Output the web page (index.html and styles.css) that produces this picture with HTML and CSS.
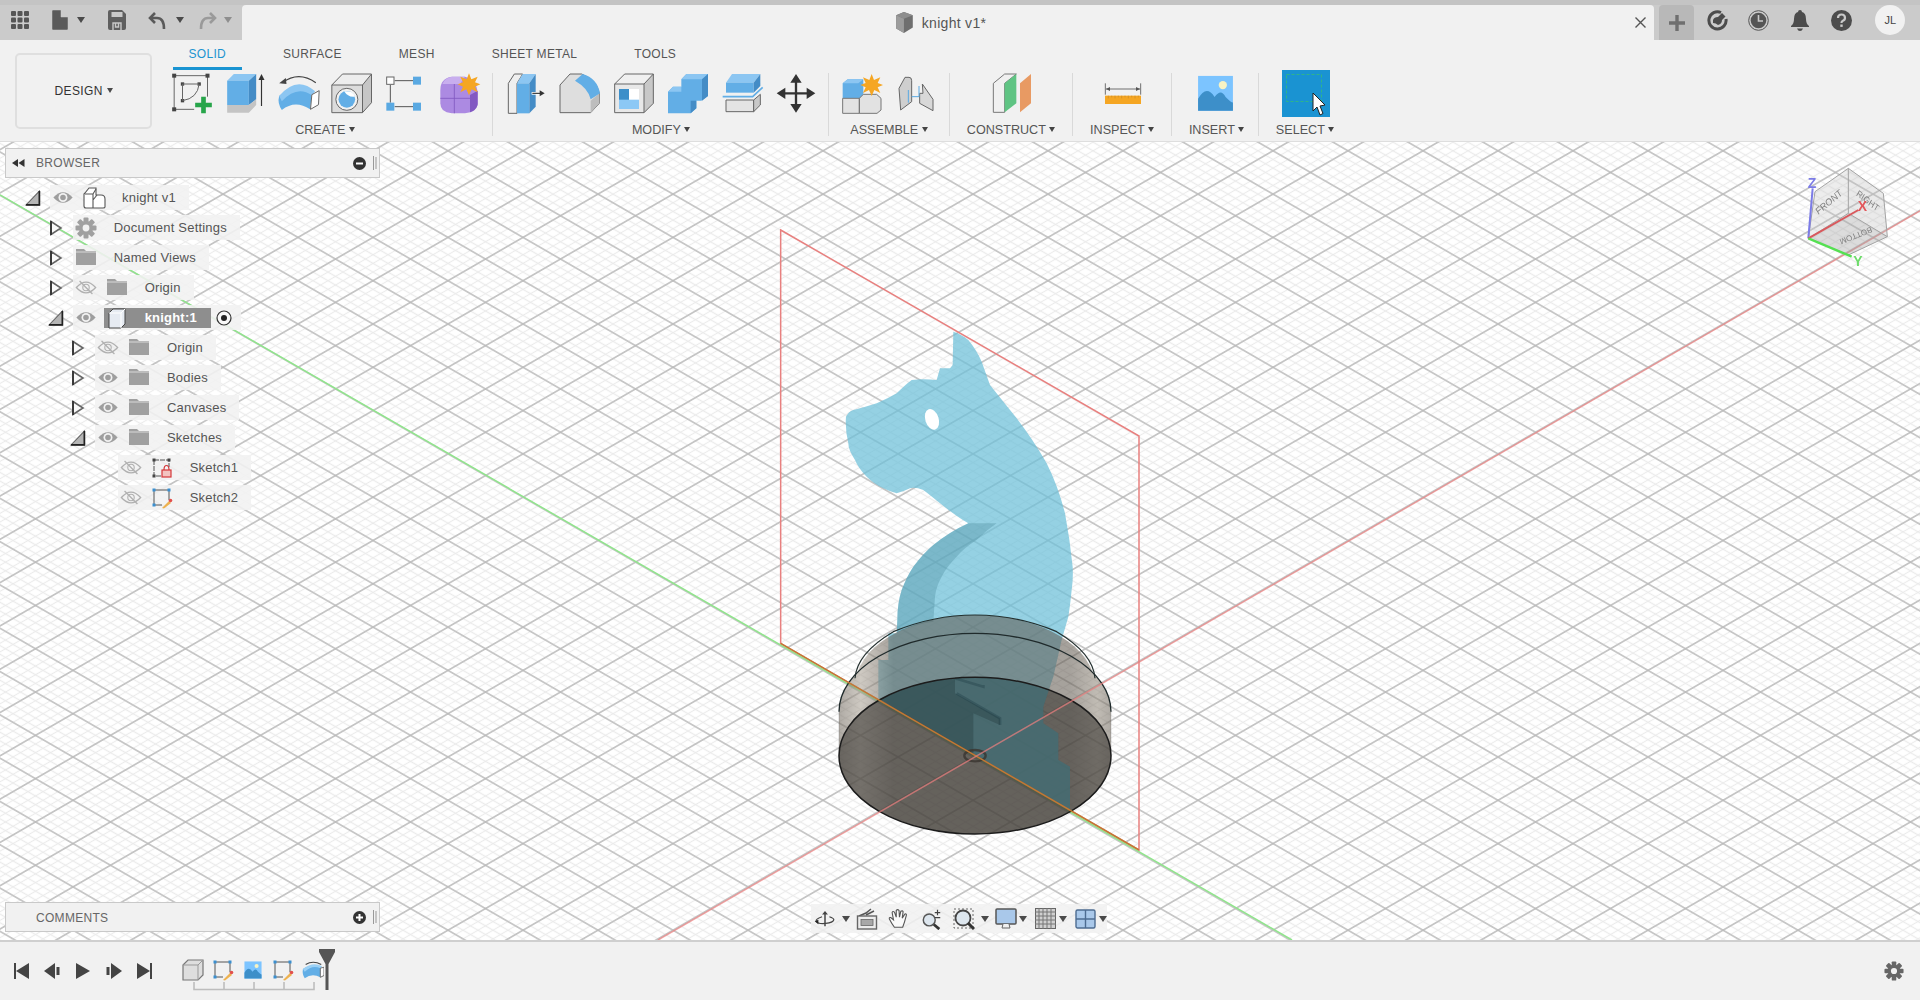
FILE: index.html
```html
<!DOCTYPE html>
<html lang="en">
<head>
    <meta charset="UTF-8">
    <title>knight v1</title>
    <link rel="stylesheet" href="styles.css">
</head>
<body>

<svg class="defs" width="0" height="0">
    <defs>
        <symbol id="eye" viewBox="0 0 20 14">
            <path d="M1 7 Q10 -3 19 7 Q10 17 1 7Z" fill="#9e9e9e"/>
            <circle cx="10" cy="7" r="4.2" fill="#f1f1f1"/>
            <circle cx="10" cy="7" r="2.6" fill="#9e9e9e"/>
        </symbol>
        <symbol id="eye-off" viewBox="0 0 20 14">
            <path d="M1 7 Q10 -3 19 7 Q10 17 1 7Z" fill="none" stroke="#b0b0b0" stroke-width="1.2"/>
            <circle cx="10" cy="7" r="3" fill="none" stroke="#b0b0b0"/>
            <path d="M4 1 L16 13" stroke="#b0b0b0" stroke-width="1.2"/>
        </symbol>
        <symbol id="folder" viewBox="0 0 20 16">
            <path d="M0 0 H8 L10 2 H20 V16 H0Z" fill="#a0a0a0"/>
            <path d="M0 3 H20" stroke="#f1f1f1" stroke-width=".7"/>
        </symbol>
        <symbol id="tri-closed" viewBox="0 0 13 16">
            <path d="M1.5 1.5 L11.5 8 L1.5 14.5Z" fill="#fafafa" stroke="#666" stroke-width="1.6"/>
            <path d="M1.5 1 V15" stroke="#333" stroke-width="1.8"/>
        </symbol>
        <symbol id="tri-open" viewBox="0 0 15 15">
            <path d="M13.5 1 V14 H1Z" fill="#b5b5b5" stroke="#666"/>
            <path d="M13.5 1 V14 H1" fill="none" stroke="#222" stroke-width="1.6"/>
        </symbol>
        <symbol id="sketch-pen" viewBox="0 0 22 22">
            <path d="M3 3 H18 V13 M3 3 V18 H11" fill="none" stroke="#555" stroke-width="1"/>
            <rect x="1.5" y="1.5" width="3" height="3" fill="#3b8fd0"/>
            <rect x="16.5" y="1.5" width="3" height="3" fill="#3b8fd0"/>
            <rect x="1.5" y="16.5" width="3" height="3" fill="#3b8fd0"/>
            <path d="M11 21 L18 14 L20 16 L13 21.5Z" fill="#edb14e"/>
            <circle cx="19.5" cy="13.5" r="1.8" fill="#e2504c"/>
        </symbol>
        <symbol id="picture" viewBox="0 0 40 40">
            <rect x="1" y="1" width="38" height="38" fill="#7cc4ff"/>
            <path d="M1 39 V26 Q10 10 19 24 Q26 14 31 24 Q37 30 39 30 V39Z" fill="#3d8fc9"/>
            <circle cx="28" cy="11" r="4.5" fill="#f7f3c4"/>
        </symbol>
    </defs>
</svg>

<header class="titlebar">
    <div class="bar-left">
        <span class="bar-ico cell-grid">
            <svg width="18" height="18" viewBox="0 0 18 18"><g fill="#555"><rect width="5" height="5" rx="1"/><rect x="6.5" width="5" height="5" rx="1"/><rect x="13" width="5" height="5" rx="1"/><rect y="6.5" width="5" height="5" rx="1"/><rect x="6.5" y="6.5" width="5" height="5" rx="1"/><rect x="13" y="6.5" width="5" height="5" rx="1"/><rect y="13" width="5" height="5" rx="1"/><rect x="6.5" y="13" width="5" height="5" rx="1"/><rect x="13" y="13" width="5" height="5" rx="1"/></g></svg>
        </span>
        <span class="bar-ico cell-doc">
            <svg width="16" height="20" viewBox="0 0 16 20"><path d="M0 1 Q0 0 1 0 H9 L16 7 V19 Q16 20 15 20 H1 Q0 20 0 19Z M9 0 V7 H16" fill="#5a5a5a" stroke="#c9c9c9" stroke-width=".5"/></svg>
        </span>
        <span class="bar-caret cell-c1"><i class="caret big dark"></i></span>
        <span class="bar-ico cell-save">
            <svg width="18" height="20" viewBox="0 0 18 20"><path d="M2 0 H14 L18 4 V18 Q18 20 16 20 H2 Q0 20 0 18 V2 Q0 0 2 0Z" fill="#5f5f5f"/><rect x="3.5" y="2" width="11" height="5" fill="#c9c9c9"/><path d="M5 20 V13 H13 V20 M7.5 13 V17 H10.5 V13" fill="none" stroke="#c9c9c9" stroke-width="1.4"/></svg>
        </span>
        <span class="bar-ico cell-undo">
            <svg width="20" height="20" viewBox="0 0 20 20"><path d="M7 3 L2 8 L7 13" fill="none" stroke="#5a5a5a" stroke-width="2.6"/><path d="M3 8 H9 Q16 8 16 19" fill="none" stroke="#5a5a5a" stroke-width="2.6"/></svg>
        </span>
        <span class="bar-caret cell-c2"><i class="caret big dark"></i></span>
        <span class="bar-ico cell-redo">
            <svg width="20" height="20" viewBox="0 0 20 20"><path d="M13 3 L18 8 L13 13" fill="none" stroke="#9a9a9a" stroke-width="2.6"/><path d="M17 8 H11 Q4 8 4 19" fill="none" stroke="#9a9a9a" stroke-width="2.6"/></svg>
        </span>
        <span class="bar-caret cell-c3"><i class="caret big muted"></i></span>
    </div>

    <div class="doc-tab">
        <div class="doc-title">
            <svg width="19" height="21" viewBox="0 0 17 19"><path d="M1 3 L8 0 L16 3 V14 L8 19 L1 15Z" fill="#6f6f6f"/><path d="M1 3 L8 6 L16 3 L8 0Z" fill="#8e8e8e"/><path d="M8 6 V19 L1 15 V3Z" fill="#9c9c9c"/></svg>
            <span>knight v1*</span>
        </div>
        <svg class="doc-close" width="11" height="11" viewBox="0 0 11 11"><path d="M0.5 0.5 L10.5 10.5 M10.5 0.5 L0.5 10.5" stroke="#555" stroke-width="1.4"/></svg>
    </div>

    <div class="new-tab">
        <svg width="18" height="18" viewBox="0 0 18 18"><path d="M9 1 V17 M1 9 H17" stroke="#6f6f6f" stroke-width="3.4"/></svg>
    </div>

    <div class="bar-right">
        <span class="bar-cell">
            <svg width="21" height="21" viewBox="0 0 21 21"><path d="M14 2.500 A8.600 8.600 0 1 0 19 9" fill="none" stroke="#4c4c4c" stroke-width="3"/><path d="M6 10 Q7 7 11 7 L15 3 L18.500 6.500 L15 10 Q15 14 11 15 Q9 13 6 13Z" fill="#4c4c4c"/></svg>
        </span>
        <span class="bar-cell">
            <svg width="21" height="21" viewBox="0 0 21 21"><circle cx="10.5" cy="10.5" r="9.8" fill="none" stroke="#555" stroke-width="1"/><circle cx="10.5" cy="10.5" r="7.8" fill="#555"/><path d="M10.5 5 V11 H15" fill="none" stroke="#c9c9c9" stroke-width="1.6"/></svg>
        </span>
        <span class="bar-cell">
            <svg width="18" height="21" viewBox="0 0 18 21"><path d="M9 0 Q11 0 11 2 Q15 3 15 9 Q15 14 18 16 V17 H0 V16 Q3 14 3 9 Q3 3 7 2 Q7 0 9 0Z M6 18.500 H12 Q11 21 9 21 Q7 21 6 18.500Z" fill="#4c4c4c"/></svg>
        </span>
        <span class="bar-cell">
            <svg width="21" height="21" viewBox="0 0 21 21"><circle cx="10.5" cy="10.500" r="10.500" fill="#4c4c4c"/><path d="M7 8 Q7 4.500 10.500 4.500 Q14 4.500 14 8 Q14 10 11.500 11 Q10.500 11.500 10.500 13" fill="none" stroke="#c9c9c9" stroke-width="2.200"/><rect x="9.300" y="14.500" width="2.400" height="2.400" fill="#c9c9c9"/></svg>
        </span>
        <span class="avatar">JL</span>
    </div>
</header>

<section class="toolbar">
    <button class="design-btn">DESIGN <i class="caret dark"></i></button>
    <div class="tools">
        <nav class="tabs">
            <span class="tab active">SOLID</span>
            <span class="tab">SURFACE</span>
            <span class="tab">MESH</span>
            <span class="tab">SHEET METAL</span>
            <span class="tab">TOOLS</span>
        </nav>
        <div class="panels">
            <div class="panel panel-create">
                <div class="panel-icons">
                    <svg class="tool" viewBox="0.5 30 159 144">
                        <path d="M25 47 H125 V110 M25 47 V148 H85" fill="none" stroke="#666" stroke-width="3"/>
                        <g fill="#444"><rect x="19" y="41" width="12" height="12"/><rect x="119" y="41" width="12" height="12"/><rect x="19" y="142" width="12" height="12"/><rect x="45" y="67" width="10" height="10"/><rect x="95" y="67" width="10" height="10"/><rect x="45" y="117" width="10" height="10"/></g>
                        <path d="M50 72 H100 M50 72 V122 M100 72 Q95 115 50 122" fill="none" stroke="#666" stroke-width="3"/>
                        <path d="M113 110 V160 M88 135 H138" stroke="#27a54a" stroke-width="14"/>
                    </svg>
                    <svg class="tool" viewBox="160.500 30 159 144">
                        <path d="M185 62 L205 42 H272 L250 62Z" fill="#8cc6f2"/>
                        <rect x="185" y="62" width="65" height="73" fill="#62aee6"/>
                        <path d="M250 62 L272 42 V118 L250 135Z" fill="#448cc6"/>
                        <path d="M185 135 H250 L272 118 V135 L250 158 H185Z" fill="#c4c4c4"/>
                        <path d="M288 138 V56" stroke="#333" stroke-width="3.500"/>
                        <path d="M279 60 L288 42 L297 60Z" fill="#333"/>
                    </svg>
                    <svg class="tool" viewBox="320.500 30 159 144">
                        <path d="M352 68 Q400 32 452 68" fill="none" stroke="#444" stroke-width="3.500"/>
                        <path d="M342 70 L362 54 L364 72Z" fill="#444"/>
                        <path d="M342 108 Q395 60 440 100 L435 148 Q390 118 350 150 Q336 130 342 108Z" fill="#62aee6"/>
                        <path d="M342 108 Q395 45 450 94 L440 106 Q395 75 350 124Z" fill="#8cc6f2"/>
                        <path d="M440 104 L462 92 L460 134 L436 148Z" fill="#fff" stroke="#666" stroke-width="3"/>
                    </svg>
                    <svg class="tool" viewBox="482.500 30 159 144">
                        <path d="M503 75 H595 V158 H503Z" fill="#dcdcdc"/>
                        <path d="M503 75 L535 42 H622 L595 75Z" fill="#ededed"/>
                        <path d="M595 75 L622 42 V128 L595 158Z" fill="#c6c6c6"/>
                        <path d="M503 158 V75 L535 42 H622 V128 L595 158Z M503 75 H595 V158 M595 75 L622 42" fill="none" stroke="#666" stroke-width="3"/>
                        <circle cx="548" cy="118" r="33" fill="#f2f2f2" stroke="#666" stroke-width="3"/>
                        <circle cx="548" cy="118" r="25" fill="#62aee6"/>
                        <path d="M540 94 Q552 113 572 110 Q568 92 540 94Z" fill="#fff"/>
                    </svg>
                    <svg class="tool" viewBox="640 30 159 144">
                        <path d="M690 62 H745 M677 75 V128 M690 140 H745" stroke="#555" stroke-width="3"/>
                        <rect x="666" y="51" width="22" height="22" fill="#fff" stroke="#666" stroke-width="3"/>
                        <rect x="745" y="50" width="24" height="24" fill="#5aa9e2"/>
                        <rect x="665" y="128" width="24" height="24" fill="#5aa9e2"/>
                        <rect x="745" y="128" width="24" height="24" fill="#5aa9e2"/>
                    </svg>
                    <svg class="tool" viewBox="798 30 159 144">
                        <path d="M826 90 Q826 55 860 50 H900 Q936 60 938 100 V130 Q936 158 900 160 H860 Q826 158 826 130Z" fill="#ac8ae2"/>
                        <path d="M832 72 Q840 52 862 50 H900 L885 72Z" fill="#c8aeee"/>
                        <path d="M915 105 L938 92 V135 Q932 152 915 157Z" fill="#8259c2"/>
                        <path d="M826 115 H915 M868 72 V160" stroke="#8259c2" stroke-width="2.500" fill="none"/>
                        <path d="M912 40 L919 58 L938 50 L930 67 L946 73 L930 80 L938 97 L920 88 L912 106 L904 88 L886 97 L894 80 L878 73 L894 67 L886 50 L905 58Z" fill="#f5a623"/>
                    </svg>
                </div>
                <div class="panel-label">CREATE <i class="caret"></i></div>
            </div>
            <span class="sep"></span>
            <div class="panel panel-modify">
                <div class="panel-icons">
                    <svg class="tool" viewBox="15.500 30 159 144">
                        <path d="M42 160 V70 L60 42 H85 L68 70 V160Z" fill="#efefef" stroke="#666" stroke-width="3"/>
                        <path d="M68 70 L85 42 H124 L105 70Z" fill="#8cc6f2"/>
                        <rect x="68" y="70" width="37" height="90" fill="#62aee6"/>
                        <path d="M105 70 L124 42 V140 L105 160Z" fill="#448cc6"/>
                        <path d="M112 100 H138" stroke="#fff" stroke-width="8"/>
                        <path d="M114 100 H138" stroke="#333" stroke-width="3.500"/>
                        <path d="M136 91 L151 100 L136 109Z" fill="#333"/>
                    </svg>
                    <svg class="tool" viewBox="180.500 30 159 144">
                        <path d="M200 158 V75 L230 42 H265 Q310 60 318 100 V130 L292 158Z" fill="#dedede" stroke="#666" stroke-width="3"/>
                        <path d="M292 122 L318 100 V130 L292 158Z" fill="#bdbdbd"/>
                        <path d="M245 62 L268 42 Q312 55 320 100 L292 118 Q285 85 245 62Z" fill="#62aee6"/>
                    </svg>
                    <svg class="tool" viewBox="340.500 30 159 144">
                        <rect x="362" y="72" width="88" height="86" fill="#e8e8e8"/>
                        <path d="M362 72 L392 42 H478 L450 72Z" fill="#f0f0f0"/>
                        <path d="M450 72 L478 42 V130 L450 158Z" fill="#c8c8c8"/>
                        <path d="M362 158 V72 L392 42 H478 V130 L450 158Z M362 72 H450 V158 M450 72 L478 42" fill="none" stroke="#666" stroke-width="3"/>
                        <rect x="375" y="87" width="60" height="60" fill="#8cc8f5"/>
                        <rect x="375" y="87" width="30" height="32" fill="#3d8fc9"/>
                        <rect x="405" y="87" width="30" height="32" fill="#fff"/>
                    </svg>
                    <svg class="tool" viewBox="500.500 30 159 144">
                        <path d="M520 160 V95 L535 80 H560 V58 L575 42 H640 V108 L620 122 H605 V145 L588 160Z" fill="#62aee6"/>
                        <path d="M520 95 L535 80 H560 V95Z M560 58 L575 42 H640 L622 58Z" fill="#8cc6f2"/>
                        <path d="M622 58 L640 42 V108 L622 122Z M588 122 H605 V145 L588 160Z" fill="#448cc6"/>
                    </svg>
                    <svg class="tool" viewBox="660.500 30 159 144">
                        <path d="M692 68 L710 42 H795 L775 68Z" fill="#8cc6f2"/>
                        <rect x="692" y="68" width="83" height="30" fill="#62aee6"/>
                        <path d="M775 68 L795 42 V78 L775 98Z" fill="#448cc6"/>
                        <path d="M682 110 H772 L802 82" fill="none" stroke="#62aee6" stroke-width="5"/>
                        <path d="M692 120 H775 V155 H692Z" fill="#e4e4e4" stroke="#666" stroke-width="3"/>
                        <path d="M775 120 L795 103 V135 L775 155Z" fill="#c8c8c8" stroke="#666" stroke-width="3"/>
                    </svg>
                    <svg class="tool" viewBox="825.500 30 159 144">
                        <path d="M905 60 V140 M865 100 H945" stroke="#333" stroke-width="7"/>
                        <path d="M905 42 L922 68 H888Z M905 158 L922 132 H888Z M847 100 L873 83 V117Z M963 100 L937 83 V117Z" fill="#333"/>
                    </svg>
                </div>
                <div class="panel-label">MODIFY <i class="caret"></i></div>
            </div>
            <span class="sep"></span>
            <div class="panel panel-assemble">
                <div class="panel-icons">
                    <svg class="tool wide" viewBox="0 30 162 144">
                        <path d="M23 115 V70 L38 58 H85 V115Z" fill="#62aee6"/>
                        <path d="M23 70 L38 58 H85 L70 70Z" fill="#8cc6f2"/>
                        <path d="M23 115 H73 V160 H23Z M73 115 L85 103 H125 L138 115 V150 L126 160 H73Z" fill="#e2e2e2" stroke="#777" stroke-width="3"/>
                        <path d="M110 42 L117 60 L136 52 L128 69 L144 75 L128 82 L136 99 L118 90 L110 108 L102 90 L84 99 L92 82 L76 75 L92 69 L84 52 L103 60Z" fill="#f5a623"/>
                    </svg>
                    <svg class="tool wide" viewBox="0 30 162 144">
                        <path d="M35 150 L30 85 L48 52 H60 Q68 52 68 62 V125 Z" fill="#cfcfcf" stroke="#666" stroke-width="3"/>
                        <path d="M92 100 H102 L100 72 L132 118 V152 L92 130Z" fill="#d8d8d8" stroke="#666" stroke-width="3"/>
                        <path d="M58 90 V128 M90 78 V110 H68" fill="none" stroke="#5aa9e2" stroke-width="3"/>
                    </svg>
                </div>
                <div class="panel-label">ASSEMBLE <i class="caret"></i></div>
            </div>
            <span class="sep"></span>
            <div class="panel panel-construct">
                <div class="panel-icons">
                    <svg class="tool" viewBox="0 30 159 144">
                        <path d="M25 157 V70 L59 42 H94 L59 70 V157Z" fill="#f0f0f0" stroke="#777" stroke-width="3"/>
                        <path d="M59 157 L94 130 V42 L59 70Z" fill="#5fc483"/>
                        <path d="M105 157 L138 130 V42 L105 70Z" fill="#e89a63"/>
                    </svg>
                </div>
                <div class="panel-label">CONSTRUCT <i class="caret"></i></div>
            </div>
            <span class="sep"></span>
            <div class="panel panel-inspect">
                <div class="panel-icons">
                    <svg class="tool" viewBox="0 30 159 144">
                        <path d="M28 70 V104 M134 70 V104 M30 87 H132" stroke="#555" stroke-width="2.500"/>
                        <path d="M30 87 L42 81 V93Z M132 87 L120 81 V93Z" fill="#555"/>
                        <rect x="27" y="107" width="108" height="25" fill="#f5a623"/>
                        <path d="M37 107 v8 M47 107 v5 M57 107 v8 M67 107 v5 M77 107 v8 M87 107 v5 M97 107 v8 M107 107 v5 M117 107 v8 M127 107 v5" stroke="#c48a2a" stroke-width="2"/>
                    </svg>
                </div>
                <div class="panel-label">INSPECT <i class="caret"></i></div>
            </div>
            <span class="sep"></span>
            <div class="panel panel-insert">
                <div class="panel-icons">
                    <svg class="tool" viewBox="0 30 159 144"><use href="#picture" x="22" y="45" width="115" height="110"/></svg>
                </div>
                <div class="panel-label">INSERT <i class="caret"></i></div>
            </div>
            <span class="sep"></span>
            <div class="panel panel-select">
                <div class="panel-icons">
                    <svg class="select-btn" width="48" height="47" viewBox="0 0 48 47">
                        <rect width="48" height="47" fill="#1a93d2"/>
                        <rect x="4.500" y="4.500" width="35" height="27" fill="none" stroke="#2fb48a" stroke-width="1" stroke-dasharray="3 2"/>
                        <path d="M31 23 V41 L35 37 L38 45 L41 43.500 L38 36 L43 35Z" fill="#fff" stroke="#222" stroke-width="1"/>
                    </svg>
                </div>
                <div class="panel-label">SELECT <i class="caret"></i></div>
            </div>
        </div>
    </div>
</section>

<main class="viewport">
    <!-- model space: grid, axes, plane and the knight sit on one canvas -->
    <svg class="canvas" viewBox="0 142 1920 798" width="1920" height="798">
        <defs>
            <pattern id="grid-minor" patternUnits="userSpaceOnUse" width="1" height="1" patternTransform="matrix(7.5 4.33 7.5 -4.33 965.500 757)">
                <path d="M0 .5 H1 M.5 0 V1" stroke="#ebebeb" stroke-width=".15" fill="none"/>
            </pattern>
            <pattern id="grid-major" patternUnits="userSpaceOnUse" width="1" height="1" patternTransform="matrix(37.5 21.65 37.5 -21.65 935.500 757)">
                <path d="M0 .5 H1 M.5 0 V1" stroke="#bababa" stroke-width=".036" fill="none"/>
            </pattern>
            <clipPath id="base-clip"><ellipse cx="645" cy="1607" rx="408" ry="235"/></clipPath>
            <linearGradient id="base-side" gradientUnits="userSpaceOnUse" x1="237" y1="0" x2="1053" y2="0">
                <stop offset="0" stop-color="#6f675c"/>
                <stop offset=".08" stop-color="#a89f92"/>
                <stop offset=".2" stop-color="#5f574d"/>
                <stop offset=".85" stop-color="#5f574d"/>
                <stop offset=".95" stop-color="#8f8678"/>
                <stop offset="1" stop-color="#6f675c"/>
            </linearGradient>
            <path id="knight-body" d="M580 335 Q600 340 625 360 Q650 390 665 425 L690 495 Q730 545 770 595 Q820 660 860 730 Q895 800 915 880 Q930 960 938 1040 Q940 1080 935 1110 Q930 1160 925 1190 L905 1260 L880 1370 L850 1460 V1510 L895 1540 V1620 L930 1640 V1770 L355 1435 V1320 H385 V1240 H410 L412 1200 Q412 1150 425 1110 Q440 1070 460 1040 Q490 1000 520 975 Q570 935 625 910 Q590 890 540 850 Q510 825 490 810 Q465 800 450 805 Q430 815 410 820 Q390 815 370 805 Q340 790 320 770 Q295 745 285 720 Q265 690 265 670 Q255 630 258 590 Q265 575 280 570 Q320 560 350 550 Q385 535 410 520 Q435 495 455 480 Q490 475 530 480 L540 445 L570 445 L578 435Z"/>
        </defs>
        <rect x="0" y="142" width="1920" height="798" fill="#fff"/>
        <rect x="0" y="142" width="1920" height="798" fill="url(#grid-minor)"/>
        <rect x="0" y="142" width="1920" height="798" fill="url(#grid-major)"/>
        <path d="M0 195 L1292 940" stroke="#90e58c" stroke-width="1.500"/>

        <g transform="translate(760 220) scale(.33333)">
            <use href="#knight-body" fill="#6cbfd8" fill-opacity=".72"/>
            <path d="M625 910 H710 Q680 930 650 960 Q610 985 590 1010 Q560 1040 545 1070 Q528 1100 525 1130 L520 1205 Q465 1212 410 1238 L412 1200 Q412 1150 425 1110 Q440 1070 460 1040 Q490 1000 520 975 Q570 935 625 910Z" fill="#4a8a9c" fill-opacity=".35"/>
            <path d="M62 30 L1137 648 V1890 L62 1270Z" fill="none" stroke="#e8807f" stroke-width="4.500"/>

            <g opacity=".55">
                <ellipse cx="645" cy="1400" rx="360" ry="215" fill="url(#base-side)"/>
                <ellipse cx="645" cy="1475" rx="408" ry="235" fill="url(#base-side)"/>
                <rect x="237" y="1475" width="816" height="132" fill="url(#base-side)"/>
                <ellipse cx="645" cy="1607" rx="408" ry="235" fill="url(#base-side)"/>
            </g>
            <ellipse cx="645" cy="1607" rx="408" ry="235" fill="#3e3a36" fill-opacity=".62"/>
            <g clip-path="url(#base-clip)">
                <use href="#knight-body" fill="#3a8797" fill-opacity=".38"/>
                <path d="M355 1435 V1380 L585 1375 V1420 L720 1495 V1515 L640 1480 V1607Z" fill="#1a2e33" fill-opacity=".3"/>
            </g>
            <path d="M585 1375 L670 1400 V1395 M590 1420 L720 1495 V1515" fill="none" stroke="#14323c" stroke-opacity=".3" stroke-width="8"/>

            <path d="M285 1375 Q290 1300 400 1235 Q520 1185 645 1185 Q770 1185 890 1235 Q1000 1300 1005 1375" fill="none" stroke="#24302f" stroke-width="3.500"/>
            <path d="M237 1475 A408 235 0 0 1 1053 1475" fill="none" stroke="#1f2a2b" stroke-width="4"/>
            <path d="M237 1475 V1607 M1053 1475 V1607" stroke="#555" stroke-width="1.500" stroke-opacity=".5"/>
            <ellipse cx="645" cy="1607" rx="408" ry="235" fill="none" stroke="#1c1c1c" stroke-width="4.500"/>
            <ellipse cx="645" cy="1607" rx="32" ry="17" fill="none" stroke="#3a3530" stroke-width="7" stroke-opacity=".8"/>
            <path d="M62 1270 L1137 1890" stroke="#c17a34" stroke-width="4.500"/>
            <ellipse cx="516" cy="598" rx="20" ry="32" transform="rotate(-18 516 598)" fill="#fff"/>
        </g>
        <path d="M658 940 L1920 211" stroke="#ea7f7f" stroke-opacity=".72" stroke-width="1.500"/>

        <!-- view cube -->
        <g class="cube" transform="translate(1790 160) scale(.33333)">
            <path d="M75 95 L175 25 V160 L55 235Z" fill="#c8c8c8" fill-opacity=".32"/>
            <path d="M175 25 L280 100 L292 230 L175 160Z" fill="#bdbdbd" fill-opacity=".32"/>
            <path d="M55 235 L175 160 L292 230 L175 285Z" fill="#a8a8a8" fill-opacity=".4"/>
            <path d="M175 25 L75 95 L55 235 L175 285 L292 230 L280 100Z M175 25 V160 L55 235 M175 160 L292 230" fill="none" stroke="#a3a3a3" stroke-width="3"/>
            <text transform="translate(85 165) rotate(-40) skewX(-8)" font-size="28">FRONT</text>
            <text transform="translate(197 105) rotate(38) skewX(8)" font-size="26">RIGHT</text>
            <text transform="translate(242 200) rotate(158)" font-size="24">BOTTOM</text>
            <path d="M55 235 L68 85" stroke="#7c7ce6" stroke-width="6"/>
            <path d="M55 235 L205 150" stroke="#d9585c" stroke-width="6"/>
            <path d="M55 235 L185 290" stroke="#55e052" stroke-width="7"/>
            <text class="axis-z" x="53" y="85" font-size="42">Z</text>
            <text class="axis-x" x="203" y="153" font-size="42">X</text>
            <text class="axis-y" x="190" y="318" font-size="42">Y</text>
        </g>
    </svg>

    <aside class="side-panels">
        <div class="side-head">
            <svg class="collapse" width="13" height="8" viewBox="0 0 13 8"><path d="M6 0 V8 L0 4Z M12.500 0 V8 L6.500 4Z" fill="#333"/></svg>
            <span class="side-title">BROWSER</span>
            <svg class="round-btn" width="13" height="13" viewBox="0 0 13 13"><circle cx="6.500" cy="6.500" r="6.500" fill="#333"/><path d="M3 6.500 H10" stroke="#fff" stroke-width="2"/></svg>
            <svg class="grip" width="4" height="14" viewBox="0 0 4 14"><path d="M.5 0 V14 M3 1 V13" stroke="#999" stroke-width="1"/></svg>
        </div>
        <ul class="tree">
            <li class="row l0">
                <svg class="tri"><use href="#tri-open"/></svg>
                <div class="pill">
                    <svg class="eye"><use href="#eye"/></svg>
                    <svg class="ico" viewBox="0 0 26 22"><path d="M4 6 L8 1 H15 V8 H20 Q24 8 24 12 V20 Q24 21 22 21 H5 Q3 21 3 19 V7Z" fill="#fff" stroke="#555" stroke-width="1.100"/><path d="M4 7 H12 L15 2 M12 7 V21 M12 13 L16 8" fill="none" stroke="#555" stroke-width="1.100"/></svg>
                    <span class="name">knight v1</span>
                </div>
            </li>
            <li class="row l1">
                <svg class="tri"><use href="#tri-closed"/></svg>
                <div class="pill">
                    <svg class="ico" viewBox="0 0 26 22"><g transform="translate(13 11)"><g fill="#a0a0a0"><circle r="7"/><rect x="-2.500" y="-10.500" width="5" height="21" rx="1"/><rect x="-2.500" y="-10.500" width="5" height="21" rx="1" transform="rotate(45)"/><rect x="-2.500" y="-10.500" width="5" height="21" rx="1" transform="rotate(90)"/><rect x="-2.500" y="-10.500" width="5" height="21" rx="1" transform="rotate(135)"/></g><circle r="3.400" fill="#f1f1f1"/></g></svg>
                    <span class="name">Document Settings</span>
                </div>
            </li>
            <li class="row l1">
                <svg class="tri"><use href="#tri-closed"/></svg>
                <div class="pill">
                    <svg class="ico"><use href="#folder" x="3" y="2" width="20" height="16"/></svg>
                    <span class="name">Named Views</span>
                </div>
            </li>
            <li class="row l1">
                <svg class="tri"><use href="#tri-closed"/></svg>
                <div class="pill">
                    <svg class="eye"><use href="#eye-off"/></svg>
                    <svg class="ico"><use href="#folder" x="3" y="2" width="20" height="16"/></svg>
                    <span class="name">Origin</span>
                </div>
            </li>
            <li class="row l1">
                <svg class="tri"><use href="#tri-open"/></svg>
                <div class="pill pill-current">
                    <svg class="eye"><use href="#eye"/></svg>
                    <div class="current">
                        <svg class="ico" viewBox="0 0 26 22"><path d="M5 6 L9 2 H21 V17 L17 21 H5Z" fill="#e6ebf2" stroke="#444" stroke-width="1"/><path d="M5 6 H17 V21 M17 6 L21 2" fill="none" stroke="#fff" stroke-width="1"/></svg>
                        <span class="name">knight:1</span>
                    </div>
                    <svg class="radio" viewBox="0 0 26 22"><circle cx="13" cy="11" r="7" fill="#f8f8f8" stroke="#333" stroke-width="1.200"/><circle cx="13" cy="11" r="3" fill="#222"/></svg>
                </div>
            </li>
            <li class="row l2">
                <svg class="tri"><use href="#tri-closed"/></svg>
                <div class="pill">
                    <svg class="eye"><use href="#eye-off"/></svg>
                    <svg class="ico"><use href="#folder" x="3" y="2" width="20" height="16"/></svg>
                    <span class="name">Origin</span>
                </div>
            </li>
            <li class="row l2">
                <svg class="tri"><use href="#tri-closed"/></svg>
                <div class="pill">
                    <svg class="eye"><use href="#eye"/></svg>
                    <svg class="ico"><use href="#folder" x="3" y="2" width="20" height="16"/></svg>
                    <span class="name">Bodies</span>
                </div>
            </li>
            <li class="row l2">
                <svg class="tri"><use href="#tri-closed"/></svg>
                <div class="pill">
                    <svg class="eye"><use href="#eye"/></svg>
                    <svg class="ico"><use href="#folder" x="3" y="2" width="20" height="16"/></svg>
                    <span class="name">Canvases</span>
                </div>
            </li>
            <li class="row l2">
                <svg class="tri"><use href="#tri-open"/></svg>
                <div class="pill">
                    <svg class="eye"><use href="#eye"/></svg>
                    <svg class="ico"><use href="#folder" x="3" y="2" width="20" height="16"/></svg>
                    <span class="name">Sketches</span>
                </div>
            </li>
            <li class="row l3">
                <span class="tri"></span>
                <div class="pill">
                    <svg class="eye"><use href="#eye-off"/></svg>
                    <svg class="ico" viewBox="0 0 26 22"><path d="M5 3 H20 V10 M5 3 V19 H12" fill="none" stroke="#555" stroke-width="1" stroke-dasharray="5 1"/><g fill="#444"><rect x="3.500" y="1.500" width="3" height="3"/><rect x="18.500" y="1.500" width="3" height="3"/><rect x="3.500" y="17.500" width="3" height="3"/></g><rect x="13" y="13" width="9" height="7" fill="#f3c4c0" stroke="#d4383a" stroke-width="1.200"/><path d="M15 13 Q15 8.500 17.500 8.500 Q20 8.500 20 13" fill="none" stroke="#d4383a" stroke-width="1.200"/></svg>
                    <span class="name">Sketch1</span>
                </div>
            </li>
            <li class="row l3">
                <span class="tri"></span>
                <div class="pill">
                    <svg class="eye"><use href="#eye-off"/></svg>
                    <svg class="ico"><use href="#sketch-pen" x="2" y="0" width="22" height="22"/></svg>
                    <span class="name">Sketch2</span>
                </div>
            </li>
        </ul>
    </aside>

    <div class="comments">
        <span class="side-title">COMMENTS</span>
        <svg class="round-btn" width="13" height="13" viewBox="0 0 13 13"><circle cx="6.500" cy="6.500" r="6.500" fill="#333"/><path d="M3 6.500 H10 M6.500 3 V10" stroke="#fff" stroke-width="2"/></svg>
        <svg class="grip" width="4" height="14" viewBox="0 0 4 14"><path d="M.5 0 V14 M3 1 V13" stroke="#999" stroke-width="1"/></svg>
    </div>

    <div class="navbar">
        <svg class="nav-ico" viewBox="0 0 30 24"><path d="M15 1 L11 6 H14 V22 H16 V6 H19Z" fill="#444"/><path d="M11 9 Q2 12 3 15 Q5 19 16 18 Q26 17 27 13 Q27 11 21 9" fill="none" stroke="#444" stroke-width="1.600"/><path d="M1 15 L6 13 L6 19Z" fill="#222"/></svg>
        <i class="caret big dark nav-caret"></i>
        <svg class="nav-ico gap-a" viewBox="0 0 22 22"><path d="M3 8 L10 5 L15 1 M10 7 L18 3" fill="none" stroke="#555" stroke-width="1.500"/><rect x="1.500" y="8" width="19" height="13" fill="#ececec" stroke="#666" stroke-width="1.400"/><rect x="5" y="11.500" width="12" height="6" fill="#a8a8a8" stroke="#666" stroke-width=".8"/></svg>
        <svg class="nav-ico gap-b" viewBox="0 0 24 24"><path d="M7 21 Q4 17 1.500 12 Q1 10 3 10.500 L6 13 L4.500 5 Q5 3 7 4.500 L9 10 L9 2.500 Q10.500 1 12 2.500 L12.500 10 L14 3.500 Q16 2.500 16.500 4 L15.500 11 L18.500 6.500 Q20.500 6 20 8 Q18 16 16 21Z" fill="#fafafa" stroke="#555" stroke-width="1.200"/></svg>
        <svg class="nav-ico gap-c" viewBox="0 0 24 24"><circle cx="9" cy="13" r="6.500" fill="#dde6ee" stroke="#555" stroke-width="1.600"/><path d="M14 18 L20 23" stroke="#333" stroke-width="3"/><path d="M18 2 V8 M15 5 H21 M15 10.500 H21" stroke="#444" stroke-width="1.300"/></svg>
        <svg class="nav-ico gap-d" viewBox="0 0 22 22"><rect x="1" y="1" width="19" height="19" fill="none" stroke="#666" stroke-dasharray="2 2"/><circle cx="10" cy="10" r="7.500" fill="#dde6ee" stroke="#444" stroke-width="1.800"/><path d="M15 15 L21 21" stroke="#333" stroke-width="3"/></svg>
        <i class="caret big dark nav-caret"></i>
        <svg class="nav-ico gap-e" viewBox="0 0 22 22"><rect x="1" y="1" width="20" height="15" rx="1" fill="#a9c8ea" stroke="#555" stroke-width="1.500"/><path d="M8 16 L7 20 H15 L14 16" fill="#f0f0f0" stroke="#666"/></svg>
        <i class="caret big dark nav-caret small-gap"></i>
        <svg class="nav-ico gap-f" viewBox="0 0 22 22"><rect x=".5" y=".5" width="20" height="20" fill="#d0d0d0" stroke="#666"/><path d="M4 0 V21 M8 0 V21 M12 0 V21 M16 0 V21 M0 4 H21 M0 8 H21 M0 12 H21 M0 16 H21" stroke="#777" stroke-width="1"/></svg>
        <i class="caret big dark nav-caret small-gap"></i>
        <svg class="nav-ico gap-f" viewBox="0 0 22 22"><rect x="1" y="2" width="19" height="18" rx="1.500" fill="#a9c8ea" stroke="#4d6c91" stroke-width="1.400"/><path d="M1 11 H20 M10.500 2 V20" stroke="#4d6c91" stroke-width="1.400"/></svg>
        <i class="caret big dark nav-caret small-gap"></i>
    </div>
</main>

<footer class="timeline">
    <div class="controls">
        <svg class="ctl" viewBox="0 0 16 16"><path d="M2 0 V16" stroke="#444" stroke-width="2"/><path d="M16 0 V16 L3 8Z" fill="#444"/></svg>
        <svg class="ctl" viewBox="0 0 16 16"><path d="M11 0 V16 L0 8Z" fill="#444"/><rect x="12.500" y="4" width="3" height="8" fill="#444"/></svg>
        <svg class="ctl" viewBox="0 0 16 16"><path d="M1 0 V16 L15 8Z" fill="#444"/></svg>
        <svg class="ctl" viewBox="0 0 16 16"><path d="M5 0 V16 L16 8Z" fill="#444"/><rect x=".5" y="4" width="3" height="8" fill="#444"/></svg>
        <svg class="ctl" viewBox="0 0 16 16"><path d="M14 0 V16" stroke="#444" stroke-width="2"/><path d="M0 0 V16 L13 8Z" fill="#444"/></svg>
    </div>
    <div class="steps">
        <svg class="step" viewBox="0 0 22 22"><path d="M1 6 L6 1 H21 V16 L16 21 H1Z" fill="#dedede" stroke="#777" stroke-width="1.200"/><path d="M1 6 H16 V21 M16 6 L21 1" fill="none" stroke="#999"/></svg>
        <svg class="step"><use href="#sketch-pen"/></svg>
        <svg class="step" viewBox="0 0 22 22"><use href="#picture" x="2" y="2" width="18" height="18"/></svg>
        <svg class="step"><use href="#sketch-pen"/></svg>
        <svg class="step" viewBox="0 0 24 22"><path d="M4 5 Q12 0 21 5" fill="none" stroke="#444" stroke-width="1.200"/><path d="M1 10 Q12 3 21 8 L20 19 Q11 14 3 20 Q0 16 1 10Z" fill="#62aee6"/><path d="M1 10 Q12 1 22 7 L20 9 Q11 5 3 13Z" fill="#9ad0f5"/><path d="M20 9 L24 8 V17 L20 19Z" fill="#fff" stroke="#666"/></svg>
        <svg class="steps-bracket" width="122" height="9" viewBox="0 0 122 9"><path d="M1 0 V7.500 H121 V0 M31 0 V7.500 M61 0 V7.500 M91 0 V7.500" fill="none" stroke="#bdbdbd" stroke-width="1.600"/></svg>
        <svg class="marker" width="16" height="41" viewBox="0 0 16 41"><path d="M0 0 H16 V3 L9.500 15 V41 H6.500 V15 L0 3Z" fill="#555"/></svg>
    </div>
    <svg class="gear" width="20" height="20" viewBox="-11 -11 22 22"><g fill="#666"><circle r="7"/><rect x="-2.500" y="-10.500" width="5" height="21" rx="1"/><rect x="-2.500" y="-10.500" width="5" height="21" rx="1" transform="rotate(45)"/><rect x="-2.500" y="-10.500" width="5" height="21" rx="1" transform="rotate(90)"/><rect x="-2.500" y="-10.500" width="5" height="21" rx="1" transform="rotate(135)"/></g><circle r="3.400" fill="#f1f1f1"/></svg>
</footer>

</body>
</html>
```

FILE: styles.css
```css
* {
    box-sizing: border-box;
}
body {
    font-family: "Liberation Sans", Arial, sans-serif;
    margin: 0;
    height: 1000px;
    width: 1920px;
    display: flex;
    flex-direction: column;
    overflow: hidden;
    color: #444;
    background: #f1f1f1;
}
.defs {
    position: absolute;
}
.caret {
    display: inline-block;
    width: 0;
    height: 0;
    border-left: 3.5px solid transparent;
    border-right: 3.5px solid transparent;
    border-top: 5px solid #444;
    vertical-align: 2px;
}
.caret.big {
    border-left-width: 4px;
    border-right-width: 4px;
    border-top-width: 6px;
}
.caret.dark {
    border-top-color: #4a4a4a;
}
.caret.muted {
    border-top-color: #8e8e8e;
}

/* top bar */
.titlebar {
    height: 40px;
    flex: none;
    display: flex;
    background: #cbcbcb;
    border-top: 5px solid #c4c4c4;
}
.bar-left {
    width: 242px;
    display: flex;
    align-items: center;
    margin-top: -5px;
    padding-top: 0;
}
.bar-ico, .bar-caret {
    display: flex;
    align-items: center;
    justify-content: center;
    width: 20px;
    height: 20px;
}
.cell-grid {
    margin-left: 10px;
}
.cell-doc {
    margin-left: 20px;
}
.bar-caret {
    width: 16px;
}
.cell-c1 {
    margin-left: 3px;
}
.cell-save {
    margin-left: 18px;
}
.cell-undo {
    margin-left: 21px;
}
.cell-c2 {
    margin-left: 4px;
}
.cell-redo {
    margin-left: 9px;
}
.cell-c3 {
    margin-left: 3px;
}
.doc-tab {
    width: 1412px;
    height: 35px;
    background: #f1f1f1;
    border-radius: 4px 4px 0 0;
    display: grid;
    grid-template-columns: 1fr auto 1fr;
    align-items: center;
}
.doc-title {
    grid-column: 2;
    display: flex;
    align-items: center;
    gap: 8px;
    margin-right: 15px;
    font-size: 14px;
    letter-spacing: .3px;
    color: #555;
}
.doc-close {
    grid-column: 3;
    justify-self: end;
    margin-right: 8px;
}
.new-tab {
    width: 35px;
    height: 35px;
    margin-left: 5px;
    background: #b8b8b8;
    border-radius: 4px 4px 0 0;
    display: flex;
    align-items: center;
    justify-content: center;
}
.bar-right {
    display: flex;
    align-items: center;
    margin-top: -5px;
    margin-left: 3px;
}
.bar-cell {
    width: 41.3px;
    display: flex;
    justify-content: center;
}
.avatar {
    width: 30px;
    height: 30px;
    border-radius: 50%;
    margin-left: 13px;
    background: #f1f1f1;
    font-size: 11px;
    color: #444;
    display: flex;
    align-items: center;
    justify-content: center;
}

/* ribbon */
.toolbar {
    height: 102px;
    flex: none;
    display: flex;
    background: #f1f1f1;
    border-bottom: 1px solid #dedede;
}
.design-btn {
    width: 137px;
    height: 76px;
    margin: 13px 14px 13px 15px;
    font: 12px "Liberation Sans", Arial, sans-serif;
    letter-spacing: .4px;
    color: #333;
    background: #f1f1f1;
    border: 2px solid #dfdfdf;
    border-radius: 5px;
}
.tabs {
    height: 30px;
    display: flex;
    padding-left: 7px;
}
.tab {
    padding: 7px 15.5px 0;
    margin-right: 26px;
    height: 30px;
    font-size: 12px;
    letter-spacing: .3px;
    color: #555;
    border-bottom: 3px solid transparent;
}
.tab.active {
    color: #1d94d0;
    border-bottom-color: #1a94d2;
}
.panels {
    display: flex;
    height: 71px;
}
.panel {
    display: flex;
    flex-direction: column;
    align-items: center;
}
.panel-icons {
    display: flex;
    height: 48px;
    justify-content: center;
}
.tool {
    width: 53px;
    height: 48px;
    display: block;
}
.tool.wide {
    width: 54px;
}
.panel-modify .tool {
    width: 54px;
}
.select-btn {
    display: block;
    margin-left: 2px;
}
.panel-label {
    margin-top: 5px;
    font-size: 12.6px;
    color: #555;
    white-space: nowrap;
}
.sep {
    width: 1px;
    margin: 3px 0 5px;
    background: #d9d9d9;
}
.panel-create {
    width: 326px;
    padding-right: 8px;
}
.panel-modify {
    width: 335px;
    padding-left: 1px;
}
.panel-assemble {
    width: 120px;
}
.panel-construct {
    width: 122px;
}
.panel-inspect {
    width: 98px;
}
.panel-insert {
    width: 86px;
}
.panel-insert .panel-label {
    margin-left: 3px;
}
.panel-select {
    width: 92px;
}

/* viewport */
.viewport {
    flex: 1;
    position: relative;
    overflow: hidden;
    background: #fff;
}
.canvas {
    position: absolute;
    left: 0;
    top: 0;
    filter: blur(.35px);
}
.cube text {
    font-family: "Liberation Sans", Arial, sans-serif;
    fill: #808080;
}
.cube .axis-z {
    fill: #7c7ce6;
    font-weight: bold;
}
.cube .axis-x {
    fill: #e2575b;
    font-weight: bold;
}
.cube .axis-y {
    fill: #6fdc6c;
    font-weight: bold;
}
.side-panels {
    position: absolute;
    left: 5px;
    top: 6px;
    width: 375px;
}
.side-head, .comments {
    height: 30px;
    display: flex;
    align-items: center;
    background: #f1f1f1;
    border: 1px solid #c9c9c9;
}
.collapse {
    margin-left: 6px;
}
.side-title {
    margin-left: 11px;
    font-size: 12px;
    letter-spacing: .3px;
    color: #666;
}
.comments .side-title {
    margin-left: 30px;
    padding-top: 1px;
}
.round-btn {
    margin-left: auto;
}
.grip {
    margin: 0 2px 0 7px;
}
.comments {
    position: absolute;
    left: 5px;
    bottom: 8px;
    width: 375px;
}
.tree {
    list-style: none;
    margin: 7px 0 0;
    padding: 0;
}
.row {
    display: flex;
    align-items: center;
    height: 25px;
    margin-bottom: 5px;
}
.l0 {
    padding-left: 11px;
}
.l1 {
    padding-left: 33.7px;
}
.l2 {
    padding-left: 56px;
}
.l3 {
    padding-left: 78.7px;
}
.tri {
    width: 34px;
    height: 16px;
    flex: none;
}
.pill {
    height: 25px;
    display: flex;
    align-items: center;
    padding-right: 13px;
    background: rgba(241, 241, 241, .88);
}
.pill-current {
    padding-right: 4px;
}
.eye {
    width: 26px;
    height: 15px;
    margin-right: 5px;
    flex: none;
}
.ico {
    width: 26px;
    height: 22px;
    flex: none;
}
.name {
    margin-left: 15px;
    font-size: 13px;
    letter-spacing: .2px;
    color: #555;
    white-space: nowrap;
}
.current {
    display: flex;
    align-items: center;
    height: 20px;
    padding-right: 14px;
    background: #8e8e8e;
}
.current .name {
    color: #fff;
    font-weight: bold;
}
.radio {
    width: 26px;
    height: 22px;
}
.navbar {
    position: absolute;
    left: 811px;
    bottom: 7px;
    width: 296px;
    height: 29px;
    display: flex;
    align-items: center;
    padding-left: 3px;
    background: rgba(241, 241, 241, .85);
}
.nav-ico {
    width: 22px;
    height: 22px;
    flex: none;
}
.nav-caret {
    margin-left: 5.5px;
    vertical-align: 0;
}
.small-gap {
    margin-left: 2px;
}
.gap-a {
    margin-left: 6.5px;
}
.gap-b {
    margin-left: 10px;
}
.gap-c {
    margin-left: 11px;
}
.gap-d {
    margin-left: 10px;
}
.gap-e {
    margin-left: 6.5px;
}
.gap-f {
    margin-left: 8px;
}

/* timeline */
.timeline {
    height: 60px;
    flex: none;
    display: flex;
    align-items: center;
    background: #f1f1f1;
    border-top: 2px solid #cfcfcf;
}
.controls {
    display: flex;
    padding-left: 5px;
}
.ctl {
    width: 16px;
    height: 16px;
    margin: 0 7.5px;
}
.steps {
    position: relative;
    display: flex;
    margin-left: 18px;
    height: 24px;
}
.step {
    width: 22px;
    height: 22px;
    margin: 0 4px;
}
.steps-bracket {
    position: absolute;
    left: 15px;
    top: 23px;
}
.marker {
    position: absolute;
    left: 141px;
    top: -10px;
}
.gear {
    margin-left: auto;
    margin-right: 16px;
}
```
